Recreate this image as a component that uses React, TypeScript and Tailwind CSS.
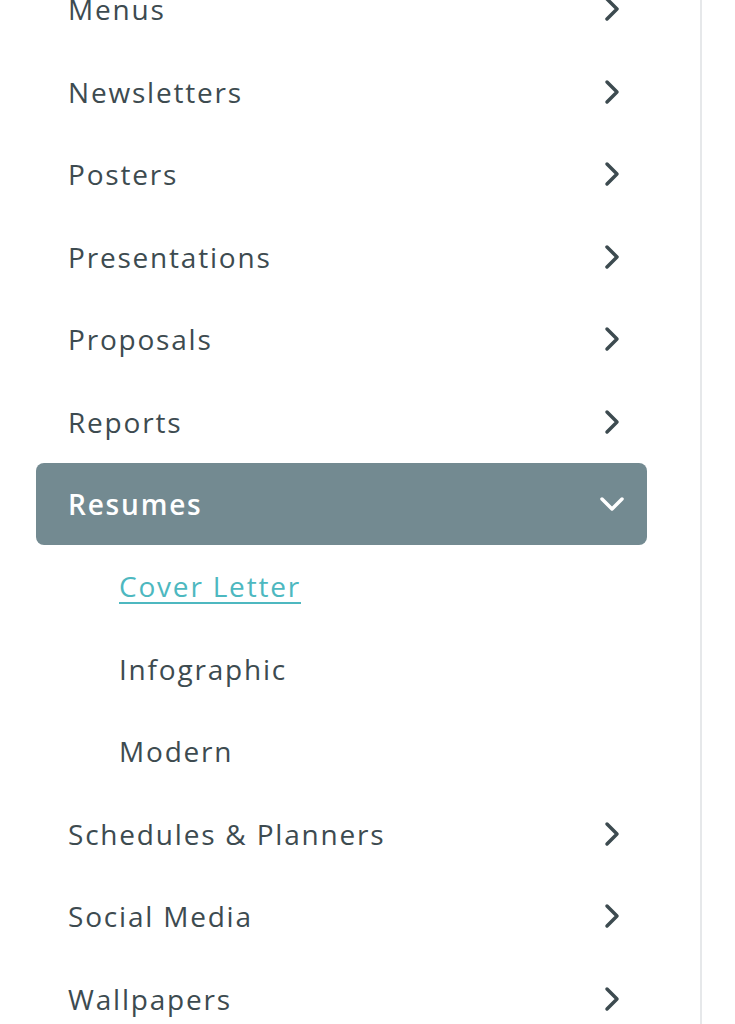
import React from "react";

type Item = {
  label: string;
  open?: boolean;
  children?: { label: string; active?: boolean }[];
};

const items: Item[] = [
  { label: "Menus" },
  { label: "Newsletters" },
  { label: "Posters" },
  { label: "Presentations" },
  { label: "Proposals" },
  { label: "Reports" },
  {
    label: "Resumes",
    open: true,
    children: [
      { label: "Cover Letter", active: true },
      { label: "Infographic" },
      { label: "Modern" },
    ],
  },
  { label: "Schedules & Planners" },
  { label: "Social Media" },
  { label: "Wallpapers" },
];

function Chevron({ down }: { down?: boolean }) {
  return (
    <svg
      width="26"
      height="26"
      viewBox="0 0 26 26"
      fill="none"
      stroke="currentColor"
      strokeWidth="3.5"
      strokeLinecap="round"
      strokeLinejoin="round"
      className={down ? "rotate-90" : ""}
    >
      <polyline points="8,3 18,13 8,23" />
    </svg>
  );
}

export default function App() {
  return (
    <div className="flex h-[1024px] overflow-hidden bg-white font-['Open_Sans',sans-serif]">
      <nav className="w-[700px] shrink-0 pl-[36px] pr-[53px] -mt-[32px]">
        {items.map((item) => (
          <div key={item.label}>
            <div
              className={
                item.open
                  ? "flex h-[82px] items-center justify-between rounded-lg bg-[#738a91] pl-[32px] pr-[22px] text-white font-semibold"
                  : "flex h-[82.5px] items-center justify-between pl-[32px] pr-[22px] text-[#3d4b50]"
              }
            >
              <span className="text-[28px] tracking-[1.8px]">{item.label}</span>
              <Chevron down={item.open} />
            </div>
            {item.children?.map((child) => (
              <div
                key={child.label}
                className="flex h-[82.5px] items-center pl-[83px]"
              >
                <span
                  className={
                    child.active
                      ? "text-[28px] tracking-[1.8px] text-[#4db8c0] underline underline-offset-[5px] decoration-2"
                      : "text-[28px] tracking-[1.8px] text-[#3d4b50]"
                  }
                >
                  {child.label}
                </span>
              </div>
            ))}
          </div>
        ))}
      </nav>
      <div className="w-[2px] shrink-0 bg-[#e6e8ea]" />
      <div className="flex-1" />
    </div>
  );
}
